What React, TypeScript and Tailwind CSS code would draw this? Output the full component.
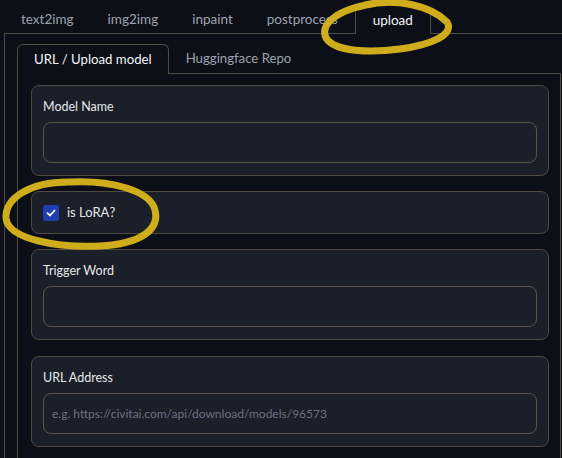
import React from 'react'

const topTabs = ['text2img', 'img2img', 'inpaint', 'postprocess', 'upload']

function Field({ label, placeholder }: { label: string; placeholder?: string }) {
    return (
        <div className="rounded-lg border border-[#4f4b42] bg-[#1a1f2a] px-[11px] pt-[11px] pb-[12px]">
            <div className="text-[12.5px] leading-[20px] text-[#e5e7eb] mb-[5px]">{label}</div>
            <div className="h-[41px] rounded-lg border border-[#5b5548] bg-[#1a1f2a] px-[8px] flex items-center">
                {placeholder && <span className="text-[12px] text-[#6b7280]">{placeholder}</span>}
            </div>
        </div>
    )
}

export default function App() {
    return (
        <div
            className="relative w-[562px] h-[458px] overflow-hidden bg-[#0c0f17]"
            style={{ fontFamily: '"Source Sans Pro", Lato, "Noto Sans", sans-serif' }}
        >
            <div className="w-[574px] pl-[4px] pt-[5px]">
                {/* Top tabs */}
                <div className="flex border-b border-[#4f4b42]">
                    {topTabs.map((t) => (
                        <div
                            key={t}
                            className={
                                t === 'upload'
                                    ? 'px-[17px] flex items-center text-[13.5px] text-[#f3f4f6] border border-b-0 border-[#4f4b42] rounded-t-md -mb-px bg-[#0c0f17] h-[29px]'
                                    : 'px-[17px] h-[28px] flex items-center text-[13.5px] text-[#9ca3af]'
                            }
                        >
                            {t}
                        </div>
                    ))}
                </div>

                {/* Outer panel */}
                <div className="border-l border-[#4f4b42] pl-[12px] pr-[13px] pt-[10px] h-[500px]">
                    {/* Inner tabs */}
                    <div className="flex border-b border-[#4f4b42]">
                        <div className="px-[16px] flex items-center text-[13.2px] text-[#f3f4f6] border border-b-0 border-[#4f4b42] rounded-t-md -mb-px bg-[#0c0f17] h-[30px]">
                            URL / Upload model
                        </div>
                        <div className="px-[17px] h-[29px] flex items-center text-[13.2px] text-[#9ca3af]">
                            Huggingface Repo
                        </div>
                    </div>

                    {/* Inner panel */}
                    <div className="border-l border-r border-[#4f4b42] pl-[13px] pt-[11px] pr-[11px] flex flex-col gap-[15px] h-[420px]">
                        <Field label="Model Name" />

                        <div className="rounded-lg border border-[#4f4b42] bg-[#1a1f2a] px-[11px] h-[43px] flex items-center gap-[8px]">
                            <span className="w-[16px] h-[16px] rounded-[3px] bg-[#1f3fb0] flex items-center justify-center">
                                <svg width="10" height="10" viewBox="0 0 10 10" fill="none">
                                    <path d="M1.5 5.2 L4 7.5 L8.5 2.5" stroke="white" strokeWidth="1.8" strokeLinecap="round" strokeLinejoin="round" />
                                </svg>
                            </span>
                            <span className="text-[13px] text-[#e5e7eb]">is LoRA?</span>
                        </div>

                        <Field label="Trigger Word" />
                        <div className="pt-[1px]">
                            <Field label="URL Address" placeholder="e.g. https://civitai.com/api/download/models/96573" />
                        </div>
                    </div>
                </div>
            </div>

            {/* Hand-drawn highlights */}
            <svg className="absolute inset-0 pointer-events-none" width="562" height="458" viewBox="0 0 562 458" fill="none">
                <path
                    d="M365 5 C395 -2, 430 5, 447 22 C455 35, 430 45, 400 49 C370 53, 335 52, 326 38 C320 25, 335 10, 372 4"
                    stroke="#d9b51c"
                    strokeWidth="7"
                    strokeLinecap="round"
                    opacity="0.95"
                />
                <path
                    d="M68 182 C30 182, 5 198, 6 218 C8 240, 60 248, 100 246 C140 244, 160 230, 155 210 C150 190, 110 180, 70 182"
                    stroke="#d9b51c"
                    strokeWidth="7"
                    strokeLinecap="round"
                    opacity="0.95"
                />
            </svg>
        </div>
    )
}
